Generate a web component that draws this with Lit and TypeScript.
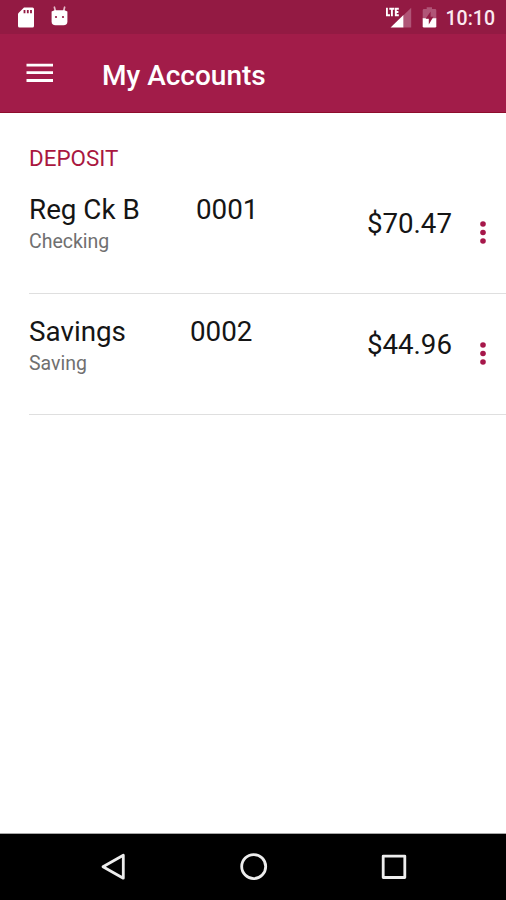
import { LitElement, html, css, svg } from "lit";
import { customElement, property } from "lit/decorators.js";

interface Account {
  name: string;
  suffix: string;
  kind: string;
  balance: string;
  nameWidth: number;
}

const ACCOUNTS: Account[] = [
  { name: "Reg Ck B", suffix: "0001", kind: "Checking", balance: "$70.47", nameWidth: 167 },
  { name: "Savings", suffix: "0002", kind: "Saving", balance: "$44.96", nameWidth: 161 },
];

@customElement("status-bar")
class StatusBar extends LitElement {
  static styles = css`
    :host {
      display: flex;
      align-items: center;
      height: 34px;
      box-sizing: border-box;
      padding: 0 11px 0 17px;
      background: #931a43;
      color: #fff;
    }
    .sd { margin-right: 15px; }
    .spacer { flex: 1; }
    .signal { margin-right: 10px; }
    .battery { margin-right: 9px; }
    .time {
      font: 500 19.5px/34px Roboto, sans-serif;
      padding-top: 3px;
      color: #fbeaf0;
    }
    svg { display: block; flex: none; }
  `;
  render() {
    return html`
      <svg class="sd" width="18" height="34" viewBox="0 0 18 34">
        <path fill="#fff" d="M7 7.5H15.5Q17 7.5 17 9V26Q17 27.5 15.5 27.5H2.5Q1 27.5 1 26V13.5Z" />
        <path fill="#931a43" d="M6.6 10h1.8v3.2h-1.8zM9.9 10h1.8v3.2h-1.8zM13.1 10h1.8v3.2h-1.8z" />
      </svg>
      <svg width="20" height="34" viewBox="0 0 20 34">
        <path stroke="#e6bccb" stroke-width="1.7" stroke-linecap="round" d="M4.4 7.2l1 4M14.6 7.2l-1 4" />
        <path fill="#fff" d="M4.5 10.3H14.5L17.4 11.6V21.5Q17.4 25.3 13.5 25.3H5.5Q1.6 25.3 1.6 21.5V11.6Z" />
        <circle cx="6" cy="17" r="1.1" fill="#931a43" />
        <circle cx="13" cy="17" r="1.1" fill="#931a43" />
      </svg>
      <span class="spacer"></span>
      <svg class="signal" width="26" height="34" viewBox="0 0 26 34">
        <path fill="#b05577" d="M25.2 7.8V27.5H17.2V15.4Z" />
        <path fill="#fff" d="M17.4 15V27.5H4.6Z" />
        <path fill="none" stroke="#fff" stroke-width="1.9" d="M.9 7.8V15.3H4M3.3 8.8H8.3M5.9 8.8V16.3M12.8 8.8H9.8V15.3H12.8M9.8 12H12.4" />
      </svg>
      <svg class="battery" width="15" height="34" viewBox="0 0 15 34">
        <path fill="#b05577" d="M4.7 7.3H10V9H13Q14.3 9 14.3 10.3V19H.7V10.3Q.7 9 2 9H4.7Z" />
        <path fill="#fff" d="M.7 18.3H14.3V26.2Q14.3 27.5 13 27.5H2Q.7 27.5 .7 26.2Z" />
        <path fill="#931a43" d="M8.6 11.5L3.6 18.8H6.8V24.5L11.4 16.8H8.6Z" />
      </svg>
      <span class="time">10:10</span>
    `;
  }
}

@customElement("app-bar")
class AppBar extends LitElement {
  static styles = css`
    :host {
      display: flex;
      align-items: center;
      box-sizing: border-box;
      height: 79px;
      padding-left: 26px;
      background: #a21c49;
      border-bottom: 1px solid #8e0d2c;
      color: #fff;
    }
    .menu { display: block; margin-right: 49px; }
    .title {
      font: 500 28px/40px Roboto, sans-serif;
      padding-top: 6px;
    }
  `;
  render() {
    return html`
      <svg class="menu" width="27" height="22" viewBox="0 0 27 22">
        <path fill="#fff" d="M.5 1.7H27V4.6H.5zM.5 9.2H27V12.1H.5zM.5 17H27V19.9H.5z" />
      </svg>
      <div class="title">My Accounts</div>
    `;
  }
}

@customElement("account-row")
class AccountRow extends LitElement {
  @property({ attribute: false }) account!: Account;
  static styles = css`
    :host {
      display: flex;
      box-sizing: border-box;
      height: 121.35px;
      margin-left: 29px;
      border-bottom: 1px solid #dfdfdf;
      font-family: Roboto, sans-serif;
      color: #151515;
    }
    .info { flex: 1; padding-top: 20.7px; }
    .heading { display: flex; font-size: 27.8px; line-height: 34px; }
    .name { flex: none; }
    .kind { font-size: 19.5px; line-height: 30px; color: #707070; }
    .balance { font-size: 27.7px; line-height: 34px; padding-top: 34.2px; }
    .more { margin: 48.3px 19px 0 27px; }
    svg { display: block; }
  `;
  render() {
    const a = this.account;
    return html`
      <div class="info">
        <div class="heading">
          <span class="name" style="width:${a.nameWidth}px">${a.name}</span>
          <span>${a.suffix}</span>
        </div>
        <div class="kind">${a.kind}</div>
      </div>
      <div class="balance">${a.balance}</div>
      <svg class="more" width="8" height="24" viewBox="0 0 8 24" fill="#a6174a">
        ${[3, 11.5, 20].map((y) => svg`<circle cx="4" cy=${y} r="2.8" />`)}
      </svg>
    `;
  }
}

@customElement("nav-bar")
class NavBar extends LitElement {
  static styles = css`
    :host {
      display: flex;
      justify-content: space-between;
      align-items: center;
      box-sizing: border-box;
      height: 67px;
      padding: 0 97px 0 99px;
      border-top: 1px solid #a8a8a8;
      background: #000;
    }
    svg { display: block; fill: none; stroke: #ededed; stroke-width: 2.8; stroke-linejoin: round; }
  `;
  render() {
    return html`
      <svg width="30" height="30"><path d="M24.3 3.2V26.2L4 14.7Z" /></svg>
      <svg width="30" height="30"><circle cx="14.7" cy="14.6" r="12" /></svg>
      <svg width="30" height="30"><rect x="4.2" y="4.1" width="21.6" height="21.4" /></svg>
    `;
  }
}

@customElement("app-root")
class AppRoot extends LitElement {
  static styles = css`
    :host {
      display: flex;
      flex-direction: column;
      width: 506px;
      height: 900px;
      overflow: hidden;
      background: #fff;
    }
    .content { flex: 1; }
    .section {
      height: 59.7px;
      box-sizing: border-box;
      padding: 31px 0 0 29px;
      font: 400 22.4px/28px Roboto, sans-serif;
      color: #a9173f;
    }
  `;
  render() {
    return html`
      <status-bar></status-bar>
      <app-bar></app-bar>
      <main class="content">
        <div class="section">DEPOSIT</div>
        ${ACCOUNTS.map((a) => html`<account-row .account=${a}></account-row>`)}
      </main>
      <nav-bar></nav-bar>
    `;
  }
}
